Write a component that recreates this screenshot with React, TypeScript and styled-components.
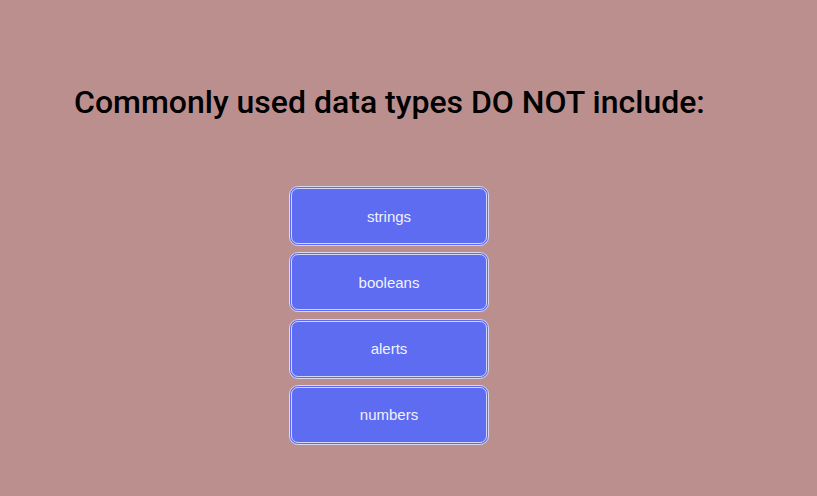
import styled, { createGlobalStyle } from 'styled-components';

const GlobalStyle = createGlobalStyle`
    body {
        margin: 0;
        background: #bc8f8f;
        font-family: 'Liberation Sans', Arial, sans-serif;
    }
`;

const answers = ['strings', 'booleans', 'alerts', 'numbers'];

export default function App() {
    return (
        <>
            <GlobalStyle />
            <Page>
                <Question>Commonly used data types DO NOT include:</Question>
                <Answers>
                    {answers.map((a) => (
                        <AnswerButton key={a}>{a}</AnswerButton>
                    ))}
                </Answers>
            </Page>
        </>
    );
}

const Page = styled.div`
    padding: 84px 0 0 74px;
    min-height: 496px;
    box-sizing: border-box;
`;

const Question = styled.h1`
    margin: 0;
    font-family: Roboto, 'Liberation Sans', sans-serif;
    font-weight: 500;
    font-size: 32px;
    line-height: 37px;
    color: #000;
`;

const Answers = styled.div`
    display: flex;
    flex-direction: column;
    gap: 6.3px;
    width: 200px;
    margin: 65px 0 0 215px;
`;

const AnswerButton = styled.button`
    height: 60px;
    border: 3px double #d6d6f5;
    border-radius: 9px;
    background: #5d6cf1;
    color: #f2f2ff;
    font-family: 'Liberation Sans', Arial, sans-serif;
    font-size: 15px;
    cursor: pointer;
`;
